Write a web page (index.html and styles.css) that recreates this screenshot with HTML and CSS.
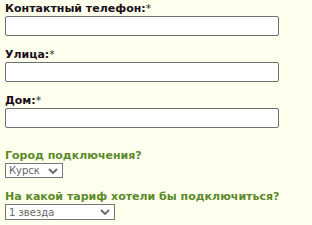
FILE: index.html
```html
<!DOCTYPE html>
<html lang="ru">
<head>
    <meta charset="UTF-8">
    <title>Заявка на подключение</title>
    <link rel="stylesheet" href="styles.css">
</head>
<body>
    <form class="order-form">
        <div class="field">
            <label for="phone">Контактный телефон:<span class="req">*</span></label>
            <input type="text" id="phone">
        </div>
        <div class="field">
            <label for="street">Улица:<span class="req">*</span></label>
            <input type="text" id="street">
        </div>
        <div class="field">
            <label for="house">Дом:<span class="req">*</span></label>
            <input type="text" id="house">
        </div>

        <div class="field field-green field-city">
            <label for="city">Город подключения?</label>
            <div class="select-wrap select-city">
                <select id="city">
                    <option>Курск</option>
                </select>
                <svg class="chevron" viewBox="0 0 10 6" width="10" height="6"><path d="M1 1 L5 5 L9 1" fill="none" stroke="#666" stroke-width="1.8"/></svg>
            </div>
        </div>
        <div class="field field-green">
            <label for="tariff">На какой тариф хотели бы подключиться?</label>
            <div class="select-wrap select-tariff">
                <select id="tariff">
                    <option>1 звезда</option>
                </select>
                <svg class="chevron" viewBox="0 0 10 6" width="10" height="6"><path d="M1 1 L5 5 L9 1" fill="none" stroke="#666" stroke-width="1.8"/></svg>
            </div>
        </div>
    </form>
</body>
</html>
```

FILE: styles.css
```css
* {
    box-sizing: border-box;
    margin: 0;
    padding: 0;
}

body {
    font-family: "DejaVu Sans", Verdana, sans-serif;
    font-size: 11px;
    background-color: #ffffee;
    color: #1a0f1a;
    padding: 1px 5px;
}

.field {
    margin-bottom: 11px;
}

.field label {
    display: block;
    font-weight: bold;
    line-height: 15px;
}

.req {
    font-weight: normal;
    color: #333;
}

.field input {
    display: block;
    width: 274px;
    height: 20px;
    border: 1px solid #6f6f6f;
    border-radius: 2px;
    background: #fff;
}

.field-green label {
    color: #5b8a2b;
}

.field-city {
    margin-top: 20px;
}

.select-wrap {
    position: relative;
    display: inline-block;
}

.select-wrap select {
    appearance: none;
    -webkit-appearance: none;
    display: block;
    height: 15px;
    border: 1px solid #777;
    border-radius: 0;
    background: #fff;
    color: #666;
    font-family: "DejaVu Sans", Verdana, sans-serif;
    font-size: 10px;
    padding: 0 0 0 3px;
    line-height: 13px;
}

.select-city select {
    width: 58px;
}

.select-tariff select {
    width: 110px;
    height: 16px;
}

.chevron {
    position: absolute;
    right: 5px;
    top: 5px;
}
```
